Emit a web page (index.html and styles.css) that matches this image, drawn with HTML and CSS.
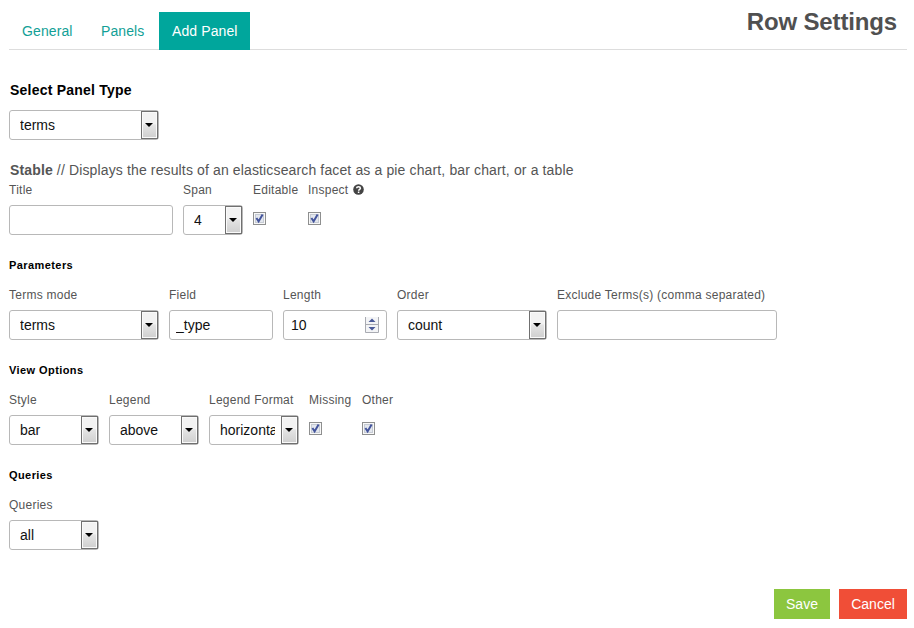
FILE: index.html
```html
<!DOCTYPE html>
<html lang="en">
<head>
<meta charset="utf-8">
<title>Row Settings</title>
<link rel="stylesheet" href="styles.css">
</head>
<body>
<svg class="defs" width="0" height="0">
  <symbol id="check" viewBox="0 0 13 13">
    <rect x=".5" y=".5" width="12" height="12" fill="#f8f8f8" stroke="#8e8f8f"/>
    <rect x="2.5" y="2.5" width="8" height="8" fill="#e3e7ee" stroke="#c6cbd4"/>
    <path d="M3.4 6 5.6 9.4 9.6 2.4" fill="none" stroke="#43549c" stroke-width="2"/>
  </symbol>
</svg>
<header class="header">
  <nav class="tabs">
    <a class="tab general">General</a>
    <a class="tab panels">Panels</a>
    <a class="tab active">Add Panel</a>
  </nav>
  <h3 class="title">Row Settings</h3>
</header>
<main>
  <h4><span>Select Panel Type</span></h4>
  <div class="select w150"><span class="value">terms</span><i class="arrow"></i></div>
  <p class="about"><strong>Stable</strong> <span>// Displays the results of an elasticsearch facet as a pie chart, bar chart, or a table</span></p>
  <section class="row first">
    <div class="field"><label>Title</label><input class="w164" type="text"></div>
    <div class="field"><label>Span</label><div class="select w60"><span class="value">4</span><i class="arrow"></i></div></div>
    <div class="field c55"><label>Editable</label><svg class="check"><use href="#check"/></svg></div>
    <div class="field"><label>Inspect <svg class="help" viewBox="0 0 11 11"><circle cx="5.5" cy="5.5" r="5.3" fill="#444"/><path d="M3.6 4.2C3.7 2.2 7.4 2.2 7.4 4.2 7.4 5.3 5.6 5.3 5.6 6.7M5.6 7.5V9" fill="none" stroke="#fff" stroke-width="1.5"/></svg></label><svg class="check"><use href="#check"/></svg></div>
  </section>
  <h5>Parameters</h5>
  <section class="row">
    <div class="field"><label>Terms mode</label><div class="select w150"><span class="value">terms</span><i class="arrow"></i></div></div>
    <div class="field"><label>Field</label><input class="w104" type="text" value="_type"></div>
    <div class="field"><label>Length</label>
      <div class="number w104"><span>10</span>
        <svg class="spin" viewBox="0 0 14 17"><path d="M.5 1V16.5H13.5V1M.5 8.5H13.5" fill="#f3f4f6" stroke="#a9abb2"/><path d="M3.5 6 7 2.5 10.5 6ZM3.5 11 7 14.5 10.5 11Z" fill="#4a5a99"/></svg>
      </div>
    </div>
    <div class="field"><label>Order</label><div class="select w150"><span class="value">count</span><i class="arrow"></i></div></div>
    <div class="field"><label class="exclude">Exclude Terms(s) (comma separated)</label><input class="w220" type="text"></div>
  </section>
  <h5>View Options</h5>
  <section class="row">
    <div class="field"><label>Style</label><div class="select w90"><span class="value">bar</span><i class="arrow"></i></div></div>
    <div class="field"><label>Legend</label><div class="select w90"><span class="value">above</span><i class="arrow"></i></div></div>
    <div class="field"><label class="format">Legend Format</label><div class="select w90"><span class="value">horizontal</span><i class="arrow"></i></div></div>
    <div class="field c53"><label>Missing</label><svg class="check"><use href="#check"/></svg></div>
    <div class="field"><label>Other</label><svg class="check"><use href="#check"/></svg></div>
  </section>
  <h5>Queries</h5>
  <section class="row">
    <div class="field"><label>Queries</label><div class="select w90"><span class="value">all</span><i class="arrow"></i></div></div>
  </section>
</main>
<footer class="footer">
  <button class="save">Save</button>
  <button class="cancel">Cancel</button>
</footer>
</body>
</html>
```
FILE: styles.css
```css
* { box-sizing: border-box; }
body { margin: 0; height: 628px; background: #fff; color: #555; font: 14px/20px "Liberation Sans", Arial, sans-serif; overflow: hidden; }
.defs { display: block; }
.header { display: flex; justify-content: space-between; height: 50px; margin: 0 7px 0 9px; padding-top: 12px; border-bottom: 1px solid #ddd; }
.tabs { display: flex; }
.tab { height: 38px; padding: 9px 12px 0 13px; color: #12a096; letter-spacing: .1px; white-space: nowrap; }
.general { width: 79px; }
.panels { width: 71px; }
.active { width: 91px; background: #00a69c; color: #fff; }
.title { margin: -10px 10px 0 0; font-size: 24px; line-height: 40px; color: #505050; letter-spacing: -.15px; white-space: nowrap; }
main { padding: 30px 0 0 9px; }
h4, h5, p { margin: 0; white-space: nowrap; }
h4 { margin: 0 0 10px 1px; font-size: 14px; line-height: 20px; color: #000; letter-spacing: .22px; }
h5 { margin: 20px 0 10px; font-size: 11px; line-height: 20px; color: #000; letter-spacing: .42px; }
.about { margin: 20px 0 0 1px; letter-spacing: .135px; }
.row { display: flex; gap: 10px; }
.field { display: flex; flex-direction: column; align-items: flex-start; }
label { height: 20px; margin-bottom: 5px; font-size: 12px; line-height: 20px; letter-spacing: .25px; white-space: nowrap; }
.format { width: 90px; }
.exclude { width: 220px; }
input, .number, .select { height: 30px; border: 1px solid #b8b8b8; border-radius: 3px; background: #fff; color: #111; font: 14px/28px "Liberation Sans", Arial, sans-serif; }
input { padding: 0 6px; outline: 0; }
.number { display: flex; justify-content: space-between; padding: 0 7px; }
.spin { width: 14px; height: 17px; margin-top: 5px; }
.select { display: flex; justify-content: space-between; }
.value { flex: 1; min-width: 0; margin: 0 6px 0 10px; overflow: hidden; white-space: nowrap; }
.arrow { display: flex; flex: none; align-items: center; justify-content: center; width: 17px; height: 28px; padding-right: 1px; border: 1px solid #707070; box-shadow: inset 0 0 0 1px #fafafa; background: linear-gradient(#f2f2f2 0 45%, #e4e4e4 50%, #cfcfcf); }
.arrow::before { content: ""; border: solid transparent; border-width: 4px 4px 0; border-top-color: #000; }
.w60 { width: 60px; }
.w90 { width: 90px; }
.w104 { width: 104px; }
.w150 { width: 150px; }
.w164 { width: 164px; }
.w220 { width: 220px; }
.c55 { width: 45px; }
.c53 { width: 43px; }
.check { width: 13px; height: 13px; margin-top: 7px; }
.help { width: 11px; height: 11px; margin-left: 1px; vertical-align: -1px; }
.footer { display: flex; justify-content: flex-end; gap: 9px; margin: 39px 7px 0 0; }
button { height: 30px; padding: 0; border: 0; color: #fff; font: 14px/20px "Liberation Sans", Arial, sans-serif; }
.save { width: 56px; background: #8cc63f; }
.cancel { width: 68px; background: #f04e37; }
```
